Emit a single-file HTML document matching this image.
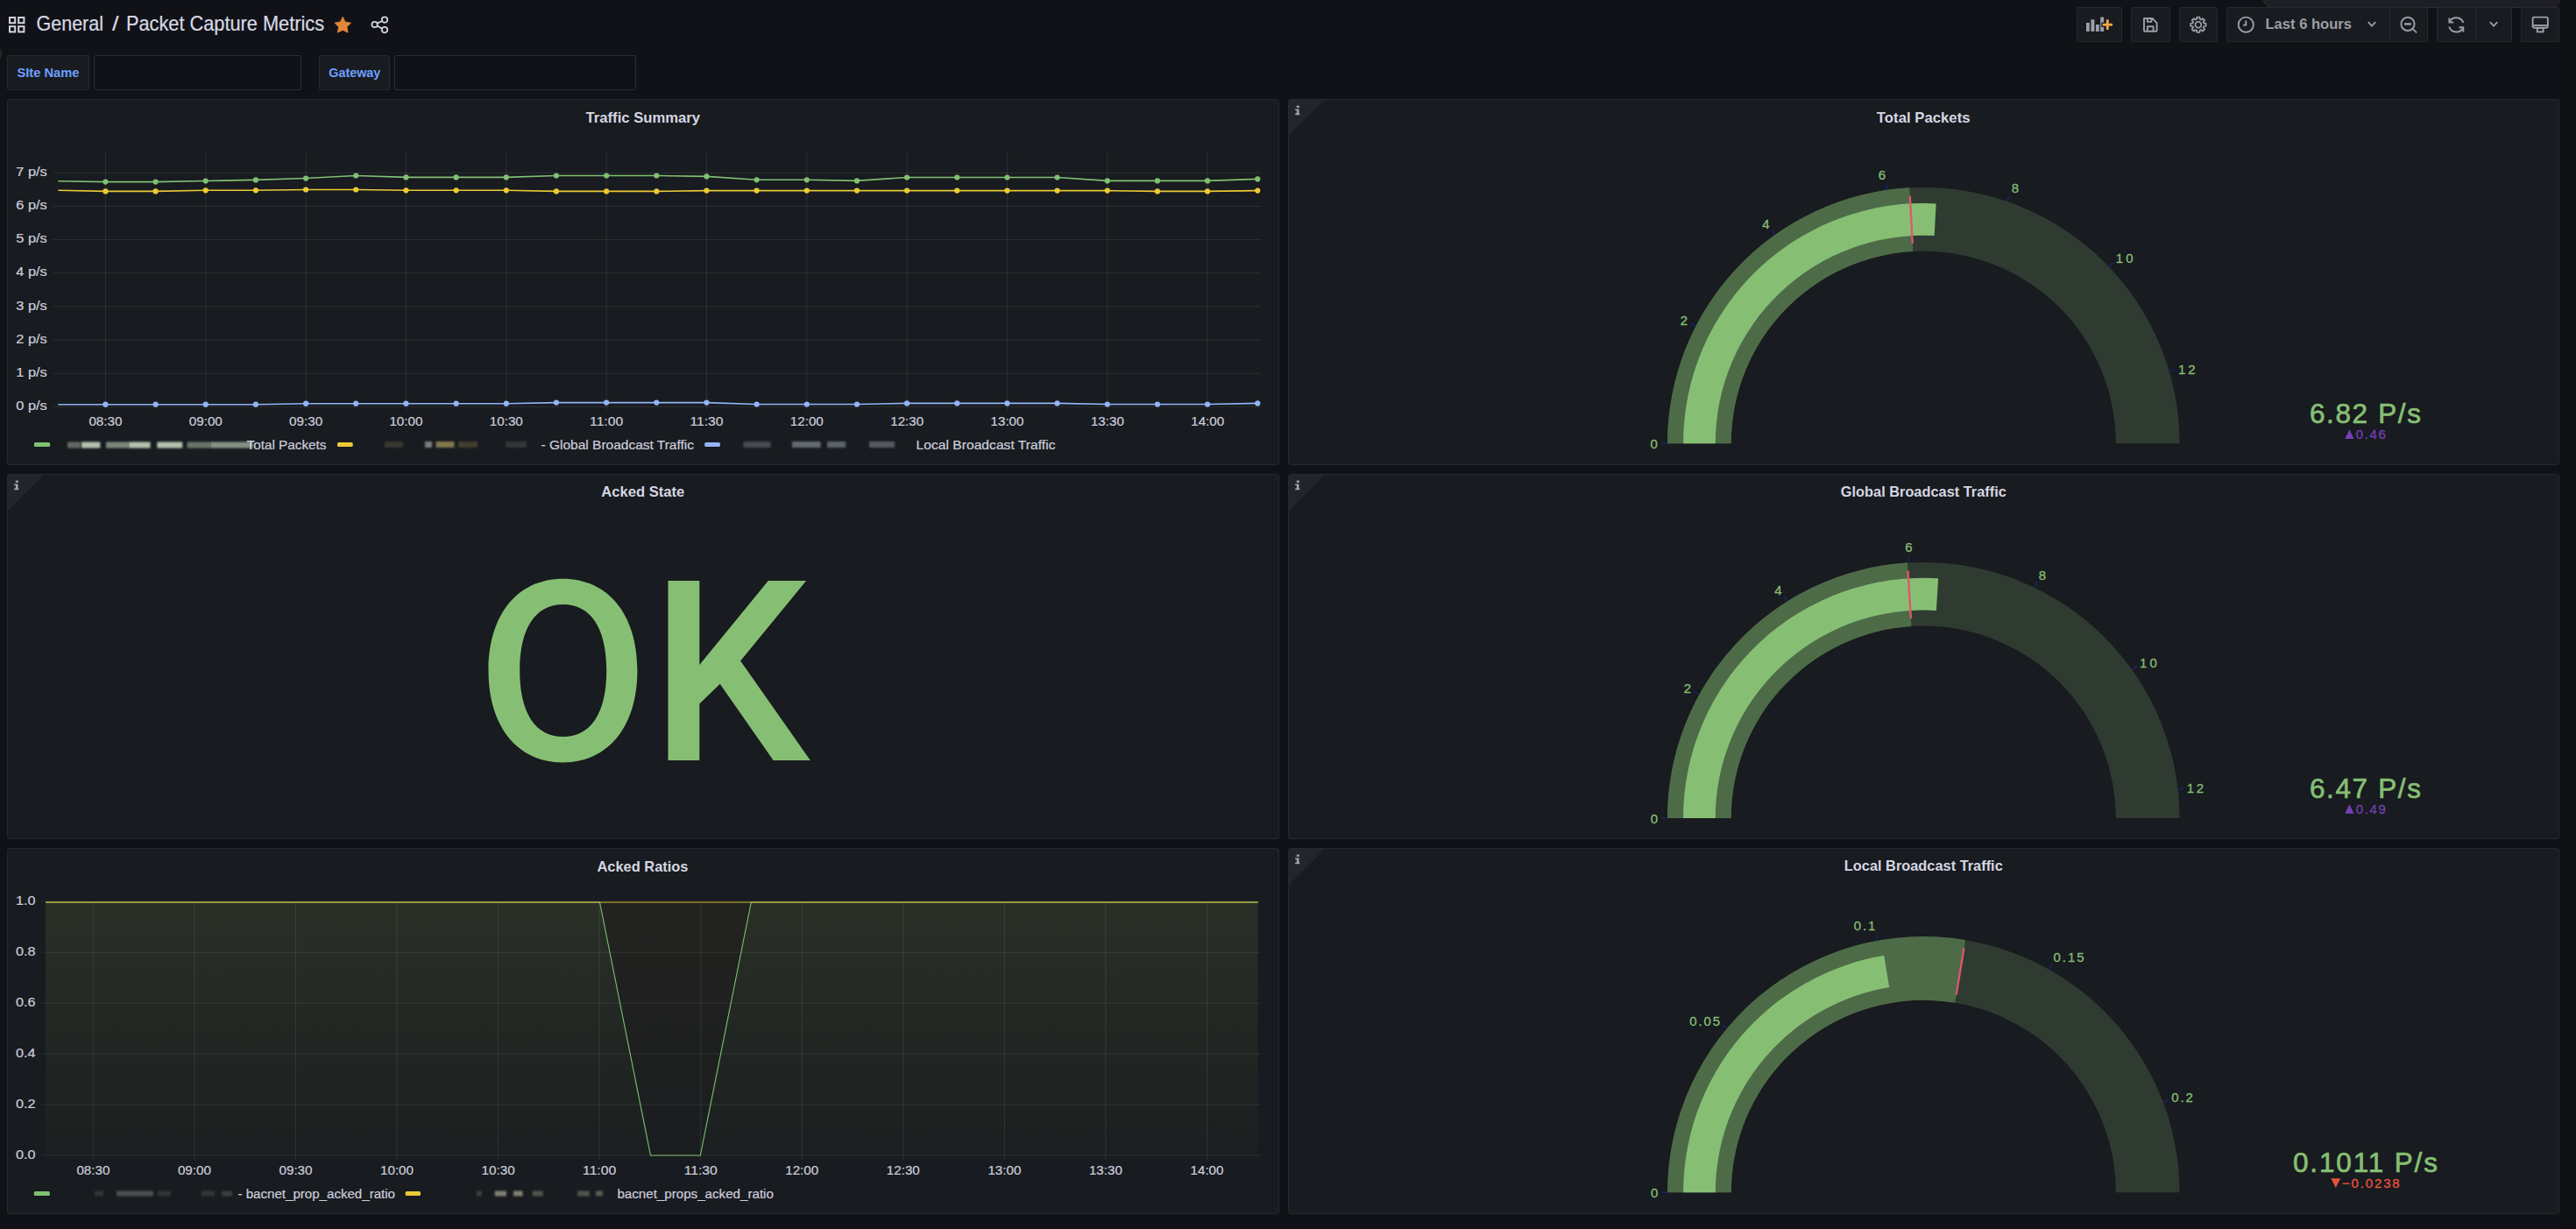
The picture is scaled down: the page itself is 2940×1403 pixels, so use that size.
<!DOCTYPE html>
<html><head><meta charset="utf-8"><title>Packet Capture Metrics - Grafana</title>
<style>
html,body{margin:0;padding:0;width:2940px;height:1403px;overflow:hidden;background:#111217;font-family:"Liberation Sans", sans-serif;}
.panel{position:absolute;background:#181b1f;border:1px solid #26282d;border-radius:3px;box-sizing:border-box;overflow:hidden;}
.corner{position:absolute;left:0;top:0;width:0;height:0;border-left:41px solid #22252b;border-bottom:41px solid transparent;}
.btn{position:absolute;top:8px;height:40px;background:#181b1f;border:1px solid #26282d;border-radius:2px;box-sizing:border-box;}
.vlabel{position:absolute;top:63px;height:40px;background:#181b1f;border:1px solid #26282d;border-radius:2px;box-sizing:border-box;}
.vinput{position:absolute;top:63px;height:40px;background:#111217;border:1px solid #2c2e33;border-radius:2px;box-sizing:border-box;}
svg{position:absolute;left:0;top:0;}
svg text{font-family:"Liberation Sans", sans-serif;}
</style></head><body>

<div style="position:absolute;left:2922px;top:0;width:18px;height:1403px;background:#0e0f12"></div>
<div style="position:absolute;left:-22px;top:49px;width:24px;height:24px;background:#202226;border:1px solid #2c2e33;border-radius:50%;box-sizing:border-box"></div>
<div style="position:absolute;left:2582px;top:-20px;width:341px;height:29px;background:#1e1f24;border:1px solid #2e3036;border-radius:12px;box-sizing:border-box"></div>
<div class="panel" style="left:8px;top:113px;width:1452px;height:418px"></div>
<div class="panel" style="left:1470px;top:113px;width:1451px;height:418px"><div class="corner"></div></div>
<div class="panel" style="left:8px;top:541px;width:1452px;height:417px"><div class="corner"></div></div>
<div class="panel" style="left:1470px;top:541px;width:1451px;height:417px"><div class="corner"></div></div>
<div class="panel" style="left:8px;top:968px;width:1452px;height:418px"></div>
<div class="panel" style="left:1470px;top:968px;width:1451px;height:418px"><div class="corner"></div></div>
<div class="vlabel" style="left:8px;width:94px"></div>
<div class="vinput" style="left:107px;width:237px"></div>
<div class="vlabel" style="left:364px;width:81px"></div>
<div class="vinput" style="left:450px;width:276px"></div>
<div class="btn" style="left:2370px;width:52px"></div>
<div class="btn" style="left:2432px;width:45px"></div>
<div class="btn" style="left:2487px;width:44px"></div>
<div class="btn" style="left:2541px;width:230px"></div>
<div style="position:absolute;left:2727px;top:9px;width:1px;height:38px;background:#26282d"></div>
<div class="btn" style="left:2781px;width:86px"></div>
<div style="position:absolute;left:2825px;top:9px;width:1px;height:38px;background:#26282d"></div>
<div class="btn" style="left:2877px;width:44px"></div>
<svg width="2940" height="1403" viewBox="0 0 2940 1403">
<defs><filter id="bl" x="-20%" y="-50%" width="140%" height="200%"><feGaussianBlur stdDeviation="0.9"/></filter><linearGradient id="fillg" x1="0" y1="0" x2="0" y2="1"><stop offset="0" stop-color="#80c073" stop-opacity="0.075"/><stop offset="1" stop-color="#80c073" stop-opacity="0.01"/></linearGradient><linearGradient id="fillyl" x1="0" y1="0" x2="0" y2="1"><stop offset="0" stop-color="#ecca36" stop-opacity="0.05"/><stop offset="1" stop-color="#ecca36" stop-opacity="0.01"/></linearGradient></defs>
<rect x="11.0" y="20.0" width="6.2" height="6.2" fill="none" stroke="#d3d3df" stroke-width="2"/>
<rect x="21.2" y="20.0" width="6.2" height="6.2" fill="none" stroke="#d3d3df" stroke-width="2"/>
<rect x="11.0" y="30.2" width="6.2" height="6.2" fill="none" stroke="#d3d3df" stroke-width="2"/>
<rect x="21.2" y="30.2" width="6.2" height="6.2" fill="none" stroke="#d3d3df" stroke-width="2"/>
<text x="41.5" y="35.2" font-size="24" font-weight="400" fill="#d8d9e4" text-anchor="start" textLength="76.5" lengthAdjust="spacingAndGlyphs" stroke="#d8d9e4" stroke-width="0.22">General</text>
<text x="128.0" y="35.2" font-size="24" font-weight="400" fill="#d8d9e4" text-anchor="start" textLength="7.5" lengthAdjust="spacingAndGlyphs" stroke="#d8d9e4" stroke-width="0.22">/</text>
<text x="144.0" y="35.2" font-size="24" font-weight="400" fill="#d8d9e4" text-anchor="start" textLength="226.0" lengthAdjust="spacingAndGlyphs" stroke="#d8d9e4" stroke-width="0.22">Packet Capture Metrics</text>
<path d="M391.2,19.2 L393.9,24.9 L400.4,26.2 L395.9,30.8 L397.1,37.1 L391.2,34.4 L385.3,37.1 L386.5,30.8 L382,26.2 L388.5,24.9 Z" fill="#e3863a" stroke="#e3863a" stroke-width="0.8" stroke-linejoin="round"/>
<g fill="none" stroke="#d3d3df" stroke-width="1.8"><circle cx="439" cy="22.6" r="3.2"/><circle cx="427.6" cy="28" r="3.2"/><circle cx="439" cy="34.1" r="3.2"/><line x1="430.5" y1="26.6" x2="436.1" y2="24"/><line x1="430.5" y1="29.5" x2="436.1" y2="32.6"/></g>
<text x="19.5" y="87.9" font-size="15" font-weight="700" fill="#6e9fff" text-anchor="start" textLength="71.0" lengthAdjust="spacingAndGlyphs" >SIte Name</text>
<text x="375.3" y="87.9" font-size="15" font-weight="700" fill="#6e9fff" text-anchor="start" textLength="59.0" lengthAdjust="spacingAndGlyphs" >Gateway</text>
<g fill="#9d9ea8"><rect x="2381" y="25.9" width="3.8" height="10"/><rect x="2386.4" y="22.3" width="4" height="13.6"/><rect x="2392" y="28" width="3.9" height="7.9"/><rect x="2397.2" y="19.6" width="4" height="16.3"/></g>
<path d="M2398.4,25.5 H2402.6 V21 H2408 V25.5 H2412.3 V30.9 H2408 V35.2 H2402.6 V30.9 H2398.4 Z" fill="#181b1f"/>
<g fill="#f5a742"><rect x="2399.7" y="26.8" width="11.3" height="2.8"/><rect x="2403.9" y="22.3" width="2.8" height="11.6"/></g>
<path d="M2447,21 H2456.5 L2461.6,26.1 V34.7 Q2461.6,35.8 2460.5,35.8 H2448.1 Q2447,35.8 2447,34.7 Z M2450.9,21 V24.9 H2455.4 V21 M2450.9,35.8 V30.2 H2457.6 V35.8" fill="none" stroke="#9d9ea8" stroke-width="1.9" stroke-linejoin="round"/>
<path d="M2517.57,26.77 L2517.57,29.83 L2515.24,30.12 L2514.67,31.50 L2516.11,33.35 L2513.95,35.51 L2512.10,34.07 L2510.72,34.64 L2510.43,36.97 L2507.37,36.97 L2507.08,34.64 L2505.70,34.07 L2503.85,35.51 L2501.69,33.35 L2503.13,31.50 L2502.56,30.12 L2500.23,29.83 L2500.23,26.77 L2502.56,26.48 L2503.13,25.10 L2501.69,23.25 L2503.85,21.09 L2505.70,22.53 L2507.08,21.96 L2507.37,19.63 L2510.43,19.63 L2510.72,21.96 L2512.10,22.53 L2513.95,21.09 L2516.11,23.25 L2514.67,25.10 L2515.24,26.48 Z" fill="none" stroke="#9d9ea8" stroke-width="1.8" stroke-linejoin="round"/><circle cx="2508.9" cy="28.3" r="3.4" fill="none" stroke="#9d9ea8" stroke-width="1.8"/>
<g fill="none" stroke="#9d9ea8" stroke-width="1.9"><circle cx="2563.3" cy="28.2" r="8.6"/><path d="M2563.3,23.5 V28.6 H2560"/></g>
<text x="2585.5" y="32.8" font-size="17" font-weight="700" fill="#9d9ea8" text-anchor="start" textLength="98.5" lengthAdjust="spacingAndGlyphs" >Last 6 hours</text>
<path d="M2702.8,25.2 L2707,29.6 L2711.2,25.2" fill="none" stroke="#9d9ea8" stroke-width="1.8"/>
<g fill="none" stroke="#9d9ea8" stroke-width="1.9"><circle cx="2748" cy="27.4" r="7.6"/><line x1="2753.5" y1="32.9" x2="2758.2" y2="37.4"/><line x1="2744" y1="27.4" x2="2752" y2="27.4" stroke-width="2.4"/></g>
<g fill="none" stroke="#9d9ea8" stroke-width="1.9"><path d="M2795.6,25 A8.6,8.6 0 0 1 2811.4,26"/><path d="M2811.2,31.5 A8.6,8.6 0 0 1 2795.2,30.5"/><path d="M2795.4,20.5 V25.5 H2800.2"/><path d="M2811.3,36.4 V31.3 H2806.5"/></g>
<path d="M2841.9,25.2 L2846.1,29.6 L2850.3,25.2" fill="none" stroke="#9d9ea8" stroke-width="1.8"/>
<g fill="none" stroke="#9d9ea8" stroke-width="1.9"><rect x="2890.6" y="19.6" width="17.2" height="12.2" rx="1.5"/><line x1="2890.6" y1="29" x2="2907.8" y2="29"/><rect x="2895.8" y="32" width="6.8" height="4.4"/></g>
<text x="733.8" y="139.9" font-size="17" font-weight="700" fill="#d5d6e2" text-anchor="middle" textLength="130.5" lengthAdjust="spacingAndGlyphs" >Traffic Summary</text>
<text x="2195.2" y="140.0" font-size="17" font-weight="700" fill="#d5d6e2" text-anchor="middle" textLength="106.7" lengthAdjust="spacingAndGlyphs" >Total Packets</text>
<text x="733.8" y="567.2" font-size="17" font-weight="700" fill="#d5d6e2" text-anchor="middle" textLength="94.9" lengthAdjust="spacingAndGlyphs" >Acked State</text>
<text x="2195.3" y="567.0" font-size="17" font-weight="700" fill="#d5d6e2" text-anchor="middle" textLength="189.0" lengthAdjust="spacingAndGlyphs" >Global Broadcast Traffic</text>
<text x="733.5" y="994.8" font-size="17" font-weight="700" fill="#d5d6e2" text-anchor="middle" textLength="104.0" lengthAdjust="spacingAndGlyphs" >Acked Ratios</text>
<text x="2195.3" y="994.4" font-size="17" font-weight="700" fill="#d5d6e2" text-anchor="middle" textLength="180.9" lengthAdjust="spacingAndGlyphs" >Local Broadcast Traffic</text>
<g fill="#a4a5b1"><rect x="1479.8" y="120.6" width="3.1" height="2.3"/><path d="M1478.2,124.5 H1482.5 V129.6 H1483.3 V131.2 H1478.2 V129.6 H1479.9 V126.0 H1478.2 Z"/></g>
<g fill="#a4a5b1"><rect x="17.8" y="548.6" width="3.1" height="2.3"/><path d="M16.2,552.5 H20.5 V557.6 H21.3 V559.2 H16.2 V557.6 H17.9 V554.0 H16.2 Z"/></g>
<g fill="#a4a5b1"><rect x="1479.8" y="548.6" width="3.1" height="2.3"/><path d="M1478.2,552.5 H1482.5 V557.6 H1483.3 V559.2 H1478.2 V557.6 H1479.9 V554.0 H1478.2 Z"/></g>
<g fill="#a4a5b1"><rect x="1479.8" y="975.6" width="3.1" height="2.3"/><path d="M1478.2,979.5 H1482.5 V984.6 H1483.3 V986.2 H1478.2 V984.6 H1479.9 V981.0 H1478.2 Z"/></g>
<line x1="60.5" y1="464.3" x2="1438.7" y2="464.3" stroke="rgba(240,250,255,0.09)" stroke-width="1"/>
<text x="53.8" y="468.0" font-size="15" font-weight="400" fill="#ccccdc" text-anchor="end" textLength="35.5" lengthAdjust="spacingAndGlyphs" stroke="#ccccdc" stroke-width="0.22">0 p/s</text>
<line x1="60.5" y1="426.2" x2="1438.7" y2="426.2" stroke="rgba(240,250,255,0.09)" stroke-width="1"/>
<text x="53.8" y="429.9" font-size="15" font-weight="400" fill="#ccccdc" text-anchor="end" textLength="35.5" lengthAdjust="spacingAndGlyphs" stroke="#ccccdc" stroke-width="0.22">1 p/s</text>
<line x1="60.5" y1="388.0" x2="1438.7" y2="388.0" stroke="rgba(240,250,255,0.09)" stroke-width="1"/>
<text x="53.8" y="391.7" font-size="15" font-weight="400" fill="#ccccdc" text-anchor="end" textLength="35.5" lengthAdjust="spacingAndGlyphs" stroke="#ccccdc" stroke-width="0.22">2 p/s</text>
<line x1="60.5" y1="349.9" x2="1438.7" y2="349.9" stroke="rgba(240,250,255,0.09)" stroke-width="1"/>
<text x="53.8" y="353.6" font-size="15" font-weight="400" fill="#ccccdc" text-anchor="end" textLength="35.5" lengthAdjust="spacingAndGlyphs" stroke="#ccccdc" stroke-width="0.22">3 p/s</text>
<line x1="60.5" y1="311.7" x2="1438.7" y2="311.7" stroke="rgba(240,250,255,0.09)" stroke-width="1"/>
<text x="53.8" y="315.4" font-size="15" font-weight="400" fill="#ccccdc" text-anchor="end" textLength="35.5" lengthAdjust="spacingAndGlyphs" stroke="#ccccdc" stroke-width="0.22">4 p/s</text>
<line x1="60.5" y1="273.6" x2="1438.7" y2="273.6" stroke="rgba(240,250,255,0.09)" stroke-width="1"/>
<text x="53.8" y="277.3" font-size="15" font-weight="400" fill="#ccccdc" text-anchor="end" textLength="35.5" lengthAdjust="spacingAndGlyphs" stroke="#ccccdc" stroke-width="0.22">5 p/s</text>
<line x1="60.5" y1="235.5" x2="1438.7" y2="235.5" stroke="rgba(240,250,255,0.09)" stroke-width="1"/>
<text x="53.8" y="239.2" font-size="15" font-weight="400" fill="#ccccdc" text-anchor="end" textLength="35.5" lengthAdjust="spacingAndGlyphs" stroke="#ccccdc" stroke-width="0.22">6 p/s</text>
<line x1="60.5" y1="197.3" x2="1438.7" y2="197.3" stroke="rgba(240,250,255,0.09)" stroke-width="1"/>
<text x="53.8" y="201.0" font-size="15" font-weight="400" fill="#ccccdc" text-anchor="end" textLength="35.5" lengthAdjust="spacingAndGlyphs" stroke="#ccccdc" stroke-width="0.22">7 p/s</text>
<line x1="120.4" y1="174.3" x2="120.4" y2="468.4" stroke="rgba(240,250,255,0.09)" stroke-width="1"/>
<text x="120.4" y="485.7" font-size="15" font-weight="400" fill="#ccccdc" text-anchor="middle" textLength="38.0" lengthAdjust="spacingAndGlyphs" stroke="#ccccdc" stroke-width="0.22">08:30</text>
<line x1="234.8" y1="174.3" x2="234.8" y2="468.4" stroke="rgba(240,250,255,0.09)" stroke-width="1"/>
<text x="234.8" y="485.7" font-size="15" font-weight="400" fill="#ccccdc" text-anchor="middle" textLength="38.0" lengthAdjust="spacingAndGlyphs" stroke="#ccccdc" stroke-width="0.22">09:00</text>
<line x1="349.1" y1="174.3" x2="349.1" y2="468.4" stroke="rgba(240,250,255,0.09)" stroke-width="1"/>
<text x="349.1" y="485.7" font-size="15" font-weight="400" fill="#ccccdc" text-anchor="middle" textLength="38.0" lengthAdjust="spacingAndGlyphs" stroke="#ccccdc" stroke-width="0.22">09:30</text>
<line x1="463.4" y1="174.3" x2="463.4" y2="468.4" stroke="rgba(240,250,255,0.09)" stroke-width="1"/>
<text x="463.4" y="485.7" font-size="15" font-weight="400" fill="#ccccdc" text-anchor="middle" textLength="38.0" lengthAdjust="spacingAndGlyphs" stroke="#ccccdc" stroke-width="0.22">10:00</text>
<line x1="577.8" y1="174.3" x2="577.8" y2="468.4" stroke="rgba(240,250,255,0.09)" stroke-width="1"/>
<text x="577.8" y="485.7" font-size="15" font-weight="400" fill="#ccccdc" text-anchor="middle" textLength="38.0" lengthAdjust="spacingAndGlyphs" stroke="#ccccdc" stroke-width="0.22">10:30</text>
<line x1="692.1" y1="174.3" x2="692.1" y2="468.4" stroke="rgba(240,250,255,0.09)" stroke-width="1"/>
<text x="692.1" y="485.7" font-size="15" font-weight="400" fill="#ccccdc" text-anchor="middle" textLength="38.0" lengthAdjust="spacingAndGlyphs" stroke="#ccccdc" stroke-width="0.22">11:00</text>
<line x1="806.5" y1="174.3" x2="806.5" y2="468.4" stroke="rgba(240,250,255,0.09)" stroke-width="1"/>
<text x="806.5" y="485.7" font-size="15" font-weight="400" fill="#ccccdc" text-anchor="middle" textLength="38.0" lengthAdjust="spacingAndGlyphs" stroke="#ccccdc" stroke-width="0.22">11:30</text>
<line x1="920.8" y1="174.3" x2="920.8" y2="468.4" stroke="rgba(240,250,255,0.09)" stroke-width="1"/>
<text x="920.8" y="485.7" font-size="15" font-weight="400" fill="#ccccdc" text-anchor="middle" textLength="38.0" lengthAdjust="spacingAndGlyphs" stroke="#ccccdc" stroke-width="0.22">12:00</text>
<line x1="1035.2" y1="174.3" x2="1035.2" y2="468.4" stroke="rgba(240,250,255,0.09)" stroke-width="1"/>
<text x="1035.2" y="485.7" font-size="15" font-weight="400" fill="#ccccdc" text-anchor="middle" textLength="38.0" lengthAdjust="spacingAndGlyphs" stroke="#ccccdc" stroke-width="0.22">12:30</text>
<line x1="1149.5" y1="174.3" x2="1149.5" y2="468.4" stroke="rgba(240,250,255,0.09)" stroke-width="1"/>
<text x="1149.5" y="485.7" font-size="15" font-weight="400" fill="#ccccdc" text-anchor="middle" textLength="38.0" lengthAdjust="spacingAndGlyphs" stroke="#ccccdc" stroke-width="0.22">13:00</text>
<line x1="1263.9" y1="174.3" x2="1263.9" y2="468.4" stroke="rgba(240,250,255,0.09)" stroke-width="1"/>
<text x="1263.9" y="485.7" font-size="15" font-weight="400" fill="#ccccdc" text-anchor="middle" textLength="38.0" lengthAdjust="spacingAndGlyphs" stroke="#ccccdc" stroke-width="0.22">13:30</text>
<line x1="1378.2" y1="174.3" x2="1378.2" y2="468.4" stroke="rgba(240,250,255,0.09)" stroke-width="1"/>
<text x="1378.2" y="485.7" font-size="15" font-weight="400" fill="#ccccdc" text-anchor="middle" textLength="38.0" lengthAdjust="spacingAndGlyphs" stroke="#ccccdc" stroke-width="0.22">14:00</text>
<path d="M66.3,206.7 L120.4,207.6 L177.6,207.6 L234.7,206.5 L291.9,205.4 L349.1,203.5 L406.2,200.5 L463.4,202.4 L520.6,202.4 L577.8,202.4 L634.9,200.5 L692.1,200.5 L749.3,200.5 L806.4,201.4 L863.6,205.3 L920.8,205.3 L978.0,206.4 L1035.1,202.5 L1092.3,202.5 L1149.5,202.5 L1206.6,202.5 L1263.8,206.4 L1321.0,206.4 L1378.1,206.4 L1435.3,204.4" fill="none" stroke="#80c073" stroke-width="1.6"/>
<circle cx="120.4" cy="207.6" r="3.1" fill="#80c073"/>
<circle cx="177.6" cy="207.6" r="3.1" fill="#80c073"/>
<circle cx="234.7" cy="206.5" r="3.1" fill="#80c073"/>
<circle cx="291.9" cy="205.4" r="3.1" fill="#80c073"/>
<circle cx="349.1" cy="203.5" r="3.1" fill="#80c073"/>
<circle cx="406.2" cy="200.5" r="3.1" fill="#80c073"/>
<circle cx="463.4" cy="202.4" r="3.1" fill="#80c073"/>
<circle cx="520.6" cy="202.4" r="3.1" fill="#80c073"/>
<circle cx="577.8" cy="202.4" r="3.1" fill="#80c073"/>
<circle cx="634.9" cy="200.5" r="3.1" fill="#80c073"/>
<circle cx="692.1" cy="200.5" r="3.1" fill="#80c073"/>
<circle cx="749.3" cy="200.5" r="3.1" fill="#80c073"/>
<circle cx="806.4" cy="201.4" r="3.1" fill="#80c073"/>
<circle cx="863.6" cy="205.3" r="3.1" fill="#80c073"/>
<circle cx="920.8" cy="205.3" r="3.1" fill="#80c073"/>
<circle cx="978.0" cy="206.4" r="3.1" fill="#80c073"/>
<circle cx="1035.1" cy="202.5" r="3.1" fill="#80c073"/>
<circle cx="1092.3" cy="202.5" r="3.1" fill="#80c073"/>
<circle cx="1149.5" cy="202.5" r="3.1" fill="#80c073"/>
<circle cx="1206.6" cy="202.5" r="3.1" fill="#80c073"/>
<circle cx="1263.8" cy="206.4" r="3.1" fill="#80c073"/>
<circle cx="1321.0" cy="206.4" r="3.1" fill="#80c073"/>
<circle cx="1378.1" cy="206.4" r="3.1" fill="#80c073"/>
<circle cx="1435.3" cy="204.4" r="3.1" fill="#80c073"/>
<path d="M66.3,217.3 L120.4,218.4 L177.6,218.4 L234.7,217.3 L291.9,217.3 L349.1,216.5 L406.2,216.5 L463.4,217.3 L520.6,217.3 L577.8,217.3 L634.9,218.4 L692.1,218.4 L749.3,218.4 L806.4,217.6 L863.6,217.6 L920.8,217.6 L978.0,217.6 L1035.1,217.6 L1092.3,217.6 L1149.5,217.6 L1206.6,217.6 L1263.8,217.6 L1321.0,218.4 L1378.1,218.4 L1435.3,217.6" fill="none" stroke="#ecca36" stroke-width="1.6"/>
<circle cx="120.4" cy="218.4" r="3.1" fill="#ecca36"/>
<circle cx="177.6" cy="218.4" r="3.1" fill="#ecca36"/>
<circle cx="234.7" cy="217.3" r="3.1" fill="#ecca36"/>
<circle cx="291.9" cy="217.3" r="3.1" fill="#ecca36"/>
<circle cx="349.1" cy="216.5" r="3.1" fill="#ecca36"/>
<circle cx="406.2" cy="216.5" r="3.1" fill="#ecca36"/>
<circle cx="463.4" cy="217.3" r="3.1" fill="#ecca36"/>
<circle cx="520.6" cy="217.3" r="3.1" fill="#ecca36"/>
<circle cx="577.8" cy="217.3" r="3.1" fill="#ecca36"/>
<circle cx="634.9" cy="218.4" r="3.1" fill="#ecca36"/>
<circle cx="692.1" cy="218.4" r="3.1" fill="#ecca36"/>
<circle cx="749.3" cy="218.4" r="3.1" fill="#ecca36"/>
<circle cx="806.4" cy="217.6" r="3.1" fill="#ecca36"/>
<circle cx="863.6" cy="217.6" r="3.1" fill="#ecca36"/>
<circle cx="920.8" cy="217.6" r="3.1" fill="#ecca36"/>
<circle cx="978.0" cy="217.6" r="3.1" fill="#ecca36"/>
<circle cx="1035.1" cy="217.6" r="3.1" fill="#ecca36"/>
<circle cx="1092.3" cy="217.6" r="3.1" fill="#ecca36"/>
<circle cx="1149.5" cy="217.6" r="3.1" fill="#ecca36"/>
<circle cx="1206.6" cy="217.6" r="3.1" fill="#ecca36"/>
<circle cx="1263.8" cy="217.6" r="3.1" fill="#ecca36"/>
<circle cx="1321.0" cy="218.4" r="3.1" fill="#ecca36"/>
<circle cx="1378.1" cy="218.4" r="3.1" fill="#ecca36"/>
<circle cx="1435.3" cy="217.6" r="3.1" fill="#ecca36"/>
<path d="M66.3,461.7 L120.4,461.7 L177.6,461.7 L234.7,461.7 L291.9,461.7 L349.1,460.7 L406.2,460.7 L463.4,460.7 L520.6,460.7 L577.8,460.7 L634.9,459.6 L692.1,459.6 L749.3,459.6 L806.4,459.6 L863.6,461.5 L920.8,461.5 L978.0,461.5 L1035.1,460.4 L1092.3,460.4 L1149.5,460.4 L1206.6,460.4 L1263.8,461.5 L1321.0,461.5 L1378.1,461.5 L1435.3,460.4" fill="none" stroke="#92b5f8" stroke-width="1.6"/>
<circle cx="120.4" cy="461.7" r="3.1" fill="#92b5f8"/>
<circle cx="177.6" cy="461.7" r="3.1" fill="#92b5f8"/>
<circle cx="234.7" cy="461.7" r="3.1" fill="#92b5f8"/>
<circle cx="291.9" cy="461.7" r="3.1" fill="#92b5f8"/>
<circle cx="349.1" cy="460.7" r="3.1" fill="#92b5f8"/>
<circle cx="406.2" cy="460.7" r="3.1" fill="#92b5f8"/>
<circle cx="463.4" cy="460.7" r="3.1" fill="#92b5f8"/>
<circle cx="520.6" cy="460.7" r="3.1" fill="#92b5f8"/>
<circle cx="577.8" cy="460.7" r="3.1" fill="#92b5f8"/>
<circle cx="634.9" cy="459.6" r="3.1" fill="#92b5f8"/>
<circle cx="692.1" cy="459.6" r="3.1" fill="#92b5f8"/>
<circle cx="749.3" cy="459.6" r="3.1" fill="#92b5f8"/>
<circle cx="806.4" cy="459.6" r="3.1" fill="#92b5f8"/>
<circle cx="863.6" cy="461.5" r="3.1" fill="#92b5f8"/>
<circle cx="920.8" cy="461.5" r="3.1" fill="#92b5f8"/>
<circle cx="978.0" cy="461.5" r="3.1" fill="#92b5f8"/>
<circle cx="1035.1" cy="460.4" r="3.1" fill="#92b5f8"/>
<circle cx="1092.3" cy="460.4" r="3.1" fill="#92b5f8"/>
<circle cx="1149.5" cy="460.4" r="3.1" fill="#92b5f8"/>
<circle cx="1206.6" cy="460.4" r="3.1" fill="#92b5f8"/>
<circle cx="1263.8" cy="461.5" r="3.1" fill="#92b5f8"/>
<circle cx="1321.0" cy="461.5" r="3.1" fill="#92b5f8"/>
<circle cx="1378.1" cy="461.5" r="3.1" fill="#92b5f8"/>
<circle cx="1435.3" cy="460.4" r="3.1" fill="#92b5f8"/>
<rect x="38.9" y="505" width="18.2" height="5" rx="1.5" fill="#80c073"/>
<rect x="385" y="505" width="17.7" height="5" rx="1.5" fill="#ecca36"/>
<rect x="804.2" y="505" width="17.7" height="5" rx="1.5" fill="#92b5f8"/>
<text x="281.5" y="512.5" font-size="15" font-weight="400" fill="#ccccdc" text-anchor="start" textLength="91.0" lengthAdjust="spacingAndGlyphs" stroke="#ccccdc" stroke-width="0.22">Total Packets</text>
<text x="617.5" y="512.5" font-size="15" font-weight="400" fill="#ccccdc" text-anchor="start" textLength="174.5" lengthAdjust="spacingAndGlyphs" stroke="#ccccdc" stroke-width="0.22">- Global Broadcast Traffic</text>
<text x="1045.5" y="512.5" font-size="15" font-weight="400" fill="#ccccdc" text-anchor="start" textLength="159.0" lengthAdjust="spacingAndGlyphs" stroke="#ccccdc" stroke-width="0.22">Local Broadcast Traffic</text>
<rect x="77.0" y="504.5" width="15.0" height="7" fill="#cfe0c8" opacity="0.4" filter="url(#bl)"/>
<rect x="93.0" y="504.5" width="21.4" height="7" fill="#cfe0c8" opacity="0.85" filter="url(#bl)"/>
<rect x="121.0" y="504.5" width="26.0" height="7" fill="#cfe0c8" opacity="0.55" filter="url(#bl)"/>
<rect x="147.0" y="504.5" width="24.6" height="7" fill="#cfe0c8" opacity="0.85" filter="url(#bl)"/>
<rect x="179.3" y="504.5" width="29.0" height="7" fill="#cfe0c8" opacity="0.85" filter="url(#bl)"/>
<rect x="213.5" y="504.5" width="26.5" height="7" fill="#cfe0c8" opacity="0.45" filter="url(#bl)"/>
<rect x="240.0" y="504.5" width="48.6" height="7" fill="#cfe0c8" opacity="0.6" filter="url(#bl)"/>
<rect x="439.0" y="504.0" width="21.0" height="7" fill="#9a9060" opacity="0.25" filter="url(#bl)"/>
<rect x="485.0" y="504.0" width="8.0" height="7" fill="#e0e0e0" opacity="0.5" filter="url(#bl)"/>
<rect x="497.5" y="504.0" width="21.0" height="7" fill="#d8c870" opacity="0.55" filter="url(#bl)"/>
<rect x="523.0" y="504.0" width="22.0" height="7" fill="#a09050" opacity="0.3" filter="url(#bl)"/>
<rect x="577.0" y="504.0" width="24.0" height="7" fill="#a0a0a0" opacity="0.2" filter="url(#bl)"/>
<rect x="848.4" y="504.0" width="31.1" height="7" fill="#b0b8c8" opacity="0.3" filter="url(#bl)"/>
<rect x="904.0" y="504.0" width="32.6" height="7" fill="#b0b8c8" opacity="0.5" filter="url(#bl)"/>
<rect x="944.0" y="504.0" width="21.2" height="7" fill="#b0b8c8" opacity="0.45" filter="url(#bl)"/>
<rect x="992.0" y="504.0" width="29.0" height="7" fill="#b0b8c8" opacity="0.4" filter="url(#bl)"/>
<rect x="52" y="1030.0" width="1383.6" height="289.0" fill="url(#fillyl)"/>
<path d="M52,1030.0 L684.5,1030.0 L742.5,1319.0 L799.3,1319.0 L857.3,1030.0 L1435.6,1030.0 L1435.6,1319.0 L52,1319.0 Z" fill="url(#fillg)"/>
<line x1="47.7" y1="1319.0" x2="1438.7" y2="1319.0" stroke="rgba(240,250,255,0.09)" stroke-width="1"/>
<text x="40.6" y="1322.7" font-size="15" font-weight="400" fill="#ccccdc" text-anchor="end" textLength="22.5" lengthAdjust="spacingAndGlyphs" stroke="#ccccdc" stroke-width="0.22">0.0</text>
<line x1="47.7" y1="1261.0" x2="1438.7" y2="1261.0" stroke="rgba(240,250,255,0.09)" stroke-width="1"/>
<text x="40.6" y="1264.7" font-size="15" font-weight="400" fill="#ccccdc" text-anchor="end" textLength="22.5" lengthAdjust="spacingAndGlyphs" stroke="#ccccdc" stroke-width="0.22">0.2</text>
<line x1="47.7" y1="1203.1" x2="1438.7" y2="1203.1" stroke="rgba(240,250,255,0.09)" stroke-width="1"/>
<text x="40.6" y="1206.8" font-size="15" font-weight="400" fill="#ccccdc" text-anchor="end" textLength="22.5" lengthAdjust="spacingAndGlyphs" stroke="#ccccdc" stroke-width="0.22">0.4</text>
<line x1="47.7" y1="1145.1" x2="1438.7" y2="1145.1" stroke="rgba(240,250,255,0.09)" stroke-width="1"/>
<text x="40.6" y="1148.8" font-size="15" font-weight="400" fill="#ccccdc" text-anchor="end" textLength="22.5" lengthAdjust="spacingAndGlyphs" stroke="#ccccdc" stroke-width="0.22">0.6</text>
<line x1="47.7" y1="1087.2" x2="1438.7" y2="1087.2" stroke="rgba(240,250,255,0.09)" stroke-width="1"/>
<text x="40.6" y="1090.9" font-size="15" font-weight="400" fill="#ccccdc" text-anchor="end" textLength="22.5" lengthAdjust="spacingAndGlyphs" stroke="#ccccdc" stroke-width="0.22">0.8</text>
<line x1="47.7" y1="1029.2" x2="1438.7" y2="1029.2" stroke="rgba(240,250,255,0.09)" stroke-width="1"/>
<text x="40.6" y="1032.9" font-size="15" font-weight="400" fill="#ccccdc" text-anchor="end" textLength="22.5" lengthAdjust="spacingAndGlyphs" stroke="#ccccdc" stroke-width="0.22">1.0</text>
<line x1="106.4" y1="1030.0" x2="106.4" y2="1324" stroke="rgba(240,250,255,0.09)" stroke-width="1"/>
<text x="106.4" y="1340.7" font-size="15" font-weight="400" fill="#ccccdc" text-anchor="middle" textLength="38.0" lengthAdjust="spacingAndGlyphs" stroke="#ccccdc" stroke-width="0.22">08:30</text>
<line x1="221.9" y1="1030.0" x2="221.9" y2="1324" stroke="rgba(240,250,255,0.09)" stroke-width="1"/>
<text x="221.9" y="1340.7" font-size="15" font-weight="400" fill="#ccccdc" text-anchor="middle" textLength="38.0" lengthAdjust="spacingAndGlyphs" stroke="#ccccdc" stroke-width="0.22">09:00</text>
<line x1="337.5" y1="1030.0" x2="337.5" y2="1324" stroke="rgba(240,250,255,0.09)" stroke-width="1"/>
<text x="337.5" y="1340.7" font-size="15" font-weight="400" fill="#ccccdc" text-anchor="middle" textLength="38.0" lengthAdjust="spacingAndGlyphs" stroke="#ccccdc" stroke-width="0.22">09:30</text>
<line x1="453.0" y1="1030.0" x2="453.0" y2="1324" stroke="rgba(240,250,255,0.09)" stroke-width="1"/>
<text x="453.0" y="1340.7" font-size="15" font-weight="400" fill="#ccccdc" text-anchor="middle" textLength="38.0" lengthAdjust="spacingAndGlyphs" stroke="#ccccdc" stroke-width="0.22">10:00</text>
<line x1="568.6" y1="1030.0" x2="568.6" y2="1324" stroke="rgba(240,250,255,0.09)" stroke-width="1"/>
<text x="568.6" y="1340.7" font-size="15" font-weight="400" fill="#ccccdc" text-anchor="middle" textLength="38.0" lengthAdjust="spacingAndGlyphs" stroke="#ccccdc" stroke-width="0.22">10:30</text>
<line x1="684.1" y1="1030.0" x2="684.1" y2="1324" stroke="rgba(240,250,255,0.09)" stroke-width="1"/>
<text x="684.1" y="1340.7" font-size="15" font-weight="400" fill="#ccccdc" text-anchor="middle" textLength="38.0" lengthAdjust="spacingAndGlyphs" stroke="#ccccdc" stroke-width="0.22">11:00</text>
<line x1="799.7" y1="1030.0" x2="799.7" y2="1324" stroke="rgba(240,250,255,0.09)" stroke-width="1"/>
<text x="799.7" y="1340.7" font-size="15" font-weight="400" fill="#ccccdc" text-anchor="middle" textLength="38.0" lengthAdjust="spacingAndGlyphs" stroke="#ccccdc" stroke-width="0.22">11:30</text>
<line x1="915.2" y1="1030.0" x2="915.2" y2="1324" stroke="rgba(240,250,255,0.09)" stroke-width="1"/>
<text x="915.2" y="1340.7" font-size="15" font-weight="400" fill="#ccccdc" text-anchor="middle" textLength="38.0" lengthAdjust="spacingAndGlyphs" stroke="#ccccdc" stroke-width="0.22">12:00</text>
<line x1="1030.8" y1="1030.0" x2="1030.8" y2="1324" stroke="rgba(240,250,255,0.09)" stroke-width="1"/>
<text x="1030.8" y="1340.7" font-size="15" font-weight="400" fill="#ccccdc" text-anchor="middle" textLength="38.0" lengthAdjust="spacingAndGlyphs" stroke="#ccccdc" stroke-width="0.22">12:30</text>
<line x1="1146.4" y1="1030.0" x2="1146.4" y2="1324" stroke="rgba(240,250,255,0.09)" stroke-width="1"/>
<text x="1146.4" y="1340.7" font-size="15" font-weight="400" fill="#ccccdc" text-anchor="middle" textLength="38.0" lengthAdjust="spacingAndGlyphs" stroke="#ccccdc" stroke-width="0.22">13:00</text>
<line x1="1261.9" y1="1030.0" x2="1261.9" y2="1324" stroke="rgba(240,250,255,0.09)" stroke-width="1"/>
<text x="1261.9" y="1340.7" font-size="15" font-weight="400" fill="#ccccdc" text-anchor="middle" textLength="38.0" lengthAdjust="spacingAndGlyphs" stroke="#ccccdc" stroke-width="0.22">13:30</text>
<line x1="1377.5" y1="1030.0" x2="1377.5" y2="1324" stroke="rgba(240,250,255,0.09)" stroke-width="1"/>
<text x="1377.5" y="1340.7" font-size="15" font-weight="400" fill="#ccccdc" text-anchor="middle" textLength="38.0" lengthAdjust="spacingAndGlyphs" stroke="#ccccdc" stroke-width="0.22">14:00</text>
<path d="M52,1030.0 L684.5,1030.0 L742.5,1319.0 L799.3,1319.0 L857.3,1030.0 L1435.6,1030.0" fill="none" stroke="#80c073" stroke-width="1.1"/>
<path d="M52,1030.0 L1435.6,1030.0" fill="none" stroke="#ecca36" stroke-opacity="0.85" stroke-width="1"/>
<rect x="38.8" y="1360" width="18.1" height="5" rx="1.5" fill="#80c073"/>
<rect x="462.7" y="1360" width="17.3" height="5" rx="1.5" fill="#ecca36"/>
<text x="271.5" y="1367.5" font-size="15" font-weight="400" fill="#ccccdc" text-anchor="start" textLength="179.5" lengthAdjust="spacingAndGlyphs" stroke="#ccccdc" stroke-width="0.22">- bacnet_prop_acked_ratio</text>
<text x="704.4" y="1367.5" font-size="15" font-weight="400" fill="#ccccdc" text-anchor="start" textLength="178.5" lengthAdjust="spacingAndGlyphs" stroke="#ccccdc" stroke-width="0.22">bacnet_props_acked_ratio</text>
<rect x="108.0" y="1359.5" width="10.0" height="6" fill="#c0c8c0" opacity="0.15" filter="url(#bl)"/>
<rect x="133.0" y="1359.5" width="42.0" height="6" fill="#c0c8c0" opacity="0.3" filter="url(#bl)"/>
<rect x="180.0" y="1359.5" width="15.0" height="6" fill="#c0c8c0" opacity="0.15" filter="url(#bl)"/>
<rect x="230.0" y="1359.5" width="15.0" height="6" fill="#c0c8c0" opacity="0.15" filter="url(#bl)"/>
<rect x="253.0" y="1359.5" width="12.0" height="6" fill="#c0c8c0" opacity="0.2" filter="url(#bl)"/>
<rect x="544.0" y="1359.5" width="6.0" height="6" fill="#d8d4b8" opacity="0.2" filter="url(#bl)"/>
<rect x="564.8" y="1359.5" width="13.1" height="6" fill="#d8d4b8" opacity="0.55" filter="url(#bl)"/>
<rect x="586.0" y="1359.5" width="10.5" height="6" fill="#d8d4b8" opacity="0.55" filter="url(#bl)"/>
<rect x="607.7" y="1359.5" width="12.1" height="6" fill="#d8d4b8" opacity="0.3" filter="url(#bl)"/>
<rect x="659.0" y="1359.5" width="14.0" height="6" fill="#d8d4b8" opacity="0.3" filter="url(#bl)"/>
<rect x="680.0" y="1359.5" width="7.8" height="6" fill="#d8d4b8" opacity="0.35" filter="url(#bl)"/>
<path d="M727.4,765.5 C727.4,829.5 694.3,870.4 642.4,870.4 C590.6,870.4 557.5,829.5 557.5,765.5 C557.5,701.6 590.6,660.7 642.4,660.7 C694.3,660.7 727.4,701.6 727.4,765.5 Z M692.2,765.5 C692.2,717.2 674.4,690.0 642.7,690.0 C611.0,690.0 593.2,717.2 593.2,765.5 C593.2,813.9 611.0,841.1 642.7,841.1 C674.4,841.1 692.2,813.9 692.2,765.5 Z " fill="#86bf74" fill-rule="evenodd"/>
<path d="M762.5,663.0 L798.3,663.0 L798.3,759.1 L876.8,663.0 L920.1,663.0 L845.1,754.4 L924.8,868.1 L882.6,868.1 L821.7,780.8 L798.3,803.6 L798.3,868.1 L762.5,868.1 Z" fill="#86bf74"/>
<path d="M1903.00,506.20 A292.3,292.3 0 0 1 2487.60,506.20 L2414.80,506.20 A219.5,219.5 0 0 0 1975.80,506.20 Z" fill="#2f3b31"/>
<path d="M1903.00,506.20 A292.3,292.3 0 0 1 2179.31,214.34 L2183.29,287.03 A219.5,219.5 0 0 0 1975.80,506.20 Z" fill="#4e6b48"/>
<path d="M1921.10,506.20 A274.2,274.2 0 0 1 2209.65,232.38 L2207.73,269.03 A237.5,237.5 0 0 0 1957.80,506.20 Z" fill="#86bf74"/>
<line x1="2182.80" y1="278.04" x2="2179.82" y2="223.62" stroke="#e2566b" stroke-width="2.3"/>
<line x1="1902.80" y1="506.20" x2="1896.30" y2="506.20" stroke="#1a2470" stroke-width="1.5"/>
<text x="1887.7" y="512.1" font-size="15" font-weight="400" fill="#86bf74" text-anchor="middle" textLength="9.5" lengthAdjust="spacing" stroke="#86bf74" stroke-width="0.3">0</text>
<line x1="1935.32" y1="372.17" x2="1929.54" y2="369.19" stroke="#1a2470" stroke-width="1.5"/>
<text x="1922.0" y="371.2" font-size="15" font-weight="400" fill="#86bf74" text-anchor="middle" textLength="9.5" lengthAdjust="spacing" stroke="#86bf74" stroke-width="0.3">2</text>
<line x1="2025.63" y1="267.94" x2="2021.86" y2="262.64" stroke="#1a2470" stroke-width="1.5"/>
<text x="2015.3" y="261.4" font-size="15" font-weight="400" fill="#86bf74" text-anchor="middle" textLength="10.2" lengthAdjust="spacing" stroke="#86bf74" stroke-width="0.3">4</text>
<line x1="2153.67" y1="216.68" x2="2152.75" y2="210.24" stroke="#1a2470" stroke-width="1.5"/>
<text x="2147.8" y="205.4" font-size="15" font-weight="400" fill="#86bf74" text-anchor="middle" textLength="9.5" lengthAdjust="spacing" stroke="#86bf74" stroke-width="0.3">6</text>
<line x1="2290.97" y1="229.79" x2="2293.09" y2="223.64" stroke="#1a2470" stroke-width="1.5"/>
<text x="2299.8" y="220.1" font-size="15" font-weight="400" fill="#86bf74" text-anchor="middle" textLength="9.5" lengthAdjust="spacing" stroke="#86bf74" stroke-width="0.3">8</text>
<line x1="2406.99" y1="304.35" x2="2411.70" y2="299.87" stroke="#1a2470" stroke-width="1.5"/>
<text x="2424.7" y="300.2" font-size="15" font-weight="400" fill="#86bf74" text-anchor="middle" textLength="19.8" lengthAdjust="spacing" stroke="#86bf74" stroke-width="0.3">10</text>
<line x1="2475.95" y1="423.79" x2="2482.19" y2="421.96" stroke="#1a2470" stroke-width="1.5"/>
<text x="2495.8" y="427.1" font-size="15" font-weight="400" fill="#86bf74" text-anchor="middle" textLength="19.5" lengthAdjust="spacing" stroke="#86bf74" stroke-width="0.3">12</text>
<text x="2699.4" y="483.3" font-size="31.5" font-weight="400" fill="#86bf74" text-anchor="middle" textLength="127.0" lengthAdjust="spacing" stroke="#86bf74" stroke-width="0.7">6.82 P/s</text>
<path d="M2676.3,500.9 L2686.5,500.9 L2681.4,490.3 Z" fill="#7440b4"/>
<text x="2688.8" y="500.9" font-size="15" font-weight="400" fill="#7440b4" text-anchor="start" textLength="34.0" lengthAdjust="spacing" stroke="#7440b4" stroke-width="0.3">0.46</text>
<path d="M1902.95,934.00 A292.3,292.3 0 0 1 2487.55,934.00 L2414.75,934.00 A219.5,219.5 0 0 0 1975.75,934.00 Z" fill="#2f3b31"/>
<path d="M1902.95,934.00 A292.3,292.3 0 0 1 2176.90,642.28 L2181.47,714.93 A219.5,219.5 0 0 0 1975.75,934.00 Z" fill="#4e6b48"/>
<path d="M1921.05,934.00 A274.2,274.2 0 0 1 2212.19,660.32 L2209.92,696.95 A237.5,237.5 0 0 0 1957.75,934.00 Z" fill="#86bf74"/>
<line x1="2180.90" y1="705.95" x2="2177.48" y2="651.56" stroke="#e2566b" stroke-width="2.3"/>
<line x1="1902.75" y1="934.00" x2="1896.25" y2="934.00" stroke="#1a2470" stroke-width="1.5"/>
<text x="1888.0" y="940.1" font-size="15" font-weight="400" fill="#86bf74" text-anchor="middle" textLength="9.5" lengthAdjust="spacing" stroke="#86bf74" stroke-width="0.3">0</text>
<line x1="1939.22" y1="792.57" x2="1933.53" y2="789.43" stroke="#1a2470" stroke-width="1.5"/>
<text x="1925.8" y="791.1" font-size="15" font-weight="400" fill="#86bf74" text-anchor="middle" textLength="9.5" lengthAdjust="spacing" stroke="#86bf74" stroke-width="0.3">2</text>
<line x1="2039.52" y1="686.40" x2="2036.06" y2="680.90" stroke="#1a2470" stroke-width="1.5"/>
<text x="2029.4" y="679.0" font-size="15" font-weight="400" fill="#86bf74" text-anchor="middle" textLength="10.2" lengthAdjust="spacing" stroke="#86bf74" stroke-width="0.3">4</text>
<line x1="2178.65" y1="641.97" x2="2178.28" y2="635.48" stroke="#1a2470" stroke-width="1.5"/>
<text x="2178.3" y="630.3" font-size="15" font-weight="400" fill="#86bf74" text-anchor="middle" textLength="9.5" lengthAdjust="spacing" stroke="#86bf74" stroke-width="0.3">6</text>
<line x1="2321.92" y1="670.35" x2="2324.74" y2="664.49" stroke="#1a2470" stroke-width="1.5"/>
<text x="2331.0" y="662.2" font-size="15" font-weight="400" fill="#86bf74" text-anchor="middle" textLength="9.5" lengthAdjust="spacing" stroke="#86bf74" stroke-width="0.3">8</text>
<line x1="2433.61" y1="764.47" x2="2438.91" y2="760.70" stroke="#1a2470" stroke-width="1.5"/>
<text x="2452.0" y="762.1" font-size="15" font-weight="400" fill="#86bf74" text-anchor="middle" textLength="19.8" lengthAdjust="spacing" stroke="#86bf74" stroke-width="0.3">10</text>
<line x1="2485.87" y1="900.86" x2="2492.32" y2="900.12" stroke="#1a2470" stroke-width="1.5"/>
<text x="2505.4" y="905.0" font-size="15" font-weight="400" fill="#86bf74" text-anchor="middle" textLength="19.5" lengthAdjust="spacing" stroke="#86bf74" stroke-width="0.3">12</text>
<text x="2699.4" y="911.1" font-size="31.5" font-weight="400" fill="#86bf74" text-anchor="middle" textLength="127.0" lengthAdjust="spacing" stroke="#86bf74" stroke-width="0.7">6.47 P/s</text>
<path d="M2676.3,928.7 L2686.5,928.7 L2681.4,918.1 Z" fill="#7440b4"/>
<text x="2688.8" y="928.7" font-size="15" font-weight="400" fill="#7440b4" text-anchor="start" textLength="34.0" lengthAdjust="spacing" stroke="#7440b4" stroke-width="0.3">0.49</text>
<path d="M1903.05,1361.30 A292.3,292.3 0 0 1 2487.65,1361.30 L2414.85,1361.30 A219.5,219.5 0 0 0 1975.85,1361.30 Z" fill="#2f3b31"/>
<path d="M1903.05,1361.30 A292.3,292.3 0 0 1 2243.08,1072.92 L2231.19,1144.75 A219.5,219.5 0 0 0 1975.85,1361.30 Z" fill="#4e6b48"/>
<path d="M1921.15,1361.30 A274.2,274.2 0 0 1 2150.20,1090.84 L2156.24,1127.04 A237.5,237.5 0 0 0 1957.85,1361.30 Z" fill="#86bf74"/>
<line x1="2232.66" y1="1135.87" x2="2241.56" y2="1082.10" stroke="#e2566b" stroke-width="2.3"/>
<line x1="1902.85" y1="1361.30" x2="1896.35" y2="1361.30" stroke="#1a2470" stroke-width="1.5"/>
<text x="1888.1" y="1367.4" font-size="15" font-weight="400" fill="#86bf74" text-anchor="middle" textLength="9.5" lengthAdjust="spacing" stroke="#86bf74" stroke-width="0.3">0</text>
<line x1="1970.70" y1="1173.98" x2="1965.71" y2="1169.81" stroke="#1a2470" stroke-width="1.5"/>
<text x="1945.7" y="1170.5" font-size="15" font-weight="400" fill="#86bf74" text-anchor="middle" textLength="34.9" lengthAdjust="spacing" stroke="#86bf74" stroke-width="0.3">0.05</text>
<line x1="2142.78" y1="1073.56" x2="2141.61" y2="1067.17" stroke="#1a2470" stroke-width="1.5"/>
<text x="2128.1" y="1062.1" font-size="15" font-weight="400" fill="#86bf74" text-anchor="middle" textLength="24.6" lengthAdjust="spacing" stroke="#86bf74" stroke-width="0.3">0.1</text>
<line x1="2339.25" y1="1106.64" x2="2342.44" y2="1100.98" stroke="#1a2470" stroke-width="1.5"/>
<text x="2361.0" y="1098.2" font-size="15" font-weight="400" fill="#86bf74" text-anchor="middle" textLength="35.2" lengthAdjust="spacing" stroke="#86bf74" stroke-width="0.3">0.15</text>
<line x1="2468.95" y1="1257.87" x2="2475.03" y2="1255.57" stroke="#1a2470" stroke-width="1.5"/>
<text x="2490.5" y="1258.4" font-size="15" font-weight="400" fill="#86bf74" text-anchor="middle" textLength="24.6" lengthAdjust="spacing" stroke="#86bf74" stroke-width="0.3">0.2</text>
<text x="2699.4" y="1338.4" font-size="31.5" font-weight="400" fill="#86bf74" text-anchor="middle" textLength="165.0" lengthAdjust="spacing" stroke="#86bf74" stroke-width="0.7">0.1011 P/s</text>
<path d="M2660.4,1345.3 L2671.2,1345.3 L2665.8,1356.0 Z" fill="#e5533f"/>
<text x="2672.9" y="1356.0" font-size="15" font-weight="400" fill="#e5533f" text-anchor="start" textLength="65.8" lengthAdjust="spacing" stroke="#e5533f" stroke-width="0.3">−0.0238</text>
</svg>
</body></html>
